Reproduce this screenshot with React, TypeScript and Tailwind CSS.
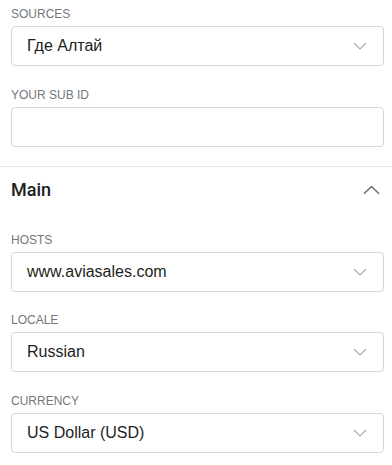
import { useState } from 'react';

type Field = { label: string; value?: string; kind: 'select' | 'input' };

const topFields: Field[] = [
    { label: 'Sources', value: 'Где Алтай', kind: 'select' },
    { label: 'Your sub ID', kind: 'input' },
];

const mainFields: Field[] = [
    { label: 'Hosts', value: 'www.aviasales.com', kind: 'select' },
    { label: 'Locale', value: 'Russian', kind: 'select' },
    { label: 'Currency', value: 'US Dollar (USD)', kind: 'select' },
];

const ChevronDown = () => (
    <svg width="14" height="8" viewBox="0 0 14 8" fill="none" className="shrink-0">
        <path d="M1 1.2 L7 6.8 L13 1.2" stroke="#9a9ca3" strokeWidth="1.1" />
    </svg>
);

const ChevronUp = () => (
    <svg width="17" height="10" viewBox="0 0 17 10" fill="none">
        <path d="M1 8.8 L8.5 1.5 L16 8.8" stroke="#6f7177" strokeWidth="1.6" />
    </svg>
);

const FieldRow = ({ field, first }: { field: Field; first?: boolean }) => (
    <div className={first ? '' : 'mt-[20.5px]'}>
        <div className="text-[12px] leading-4 uppercase text-[#74777c] mb-1">{field.label}</div>
        {field.kind === 'select' ? (
            <div className="h-10 flex items-center justify-between border border-[#d6d7db] rounded-[4px] pl-[15px] pr-[16px] bg-white">
                <span className="text-[16px] text-[#1d1e20]">{field.value}</span>
                <ChevronDown />
            </div>
        ) : (
            <input className="block w-full h-10 border border-[#d6d7db] rounded-[4px] px-[15px] text-[16px] outline-none bg-white" />
        )}
    </div>
);

export default function App() {
    const [open, setOpen] = useState(true);
    return (
        <div className="w-[392px] h-[465px] bg-white overflow-hidden" style={{ fontFamily: '"Liberation Sans", Arial, sans-serif' }}>
            <div className="pl-[11px] pr-[8px] pt-[6px] pb-[19px]">
                {topFields.map((f, i) => (
                    <FieldRow key={f.label} field={f} first={i === 0} />
                ))}
            </div>
            <div className="border-t border-[#e8e8ea] pl-[11px] pr-[8px]">
                <button
                    onClick={() => setOpen(!open)}
                    className="w-full flex items-center justify-between pt-[11px] pr-[4px]"
                >
                    <span className="text-[18px] leading-6 font-medium text-[#1d1e20] font-['Roboto',sans-serif]">Main</span>
                    <ChevronUp />
                </button>
                {open && (
                    <div className="pt-[30px]">
                        {mainFields.map((f, i) => (
                            <FieldRow key={f.label} field={f} first={i === 0} />
                        ))}
                    </div>
                )}
            </div>
        </div>
    );
}
